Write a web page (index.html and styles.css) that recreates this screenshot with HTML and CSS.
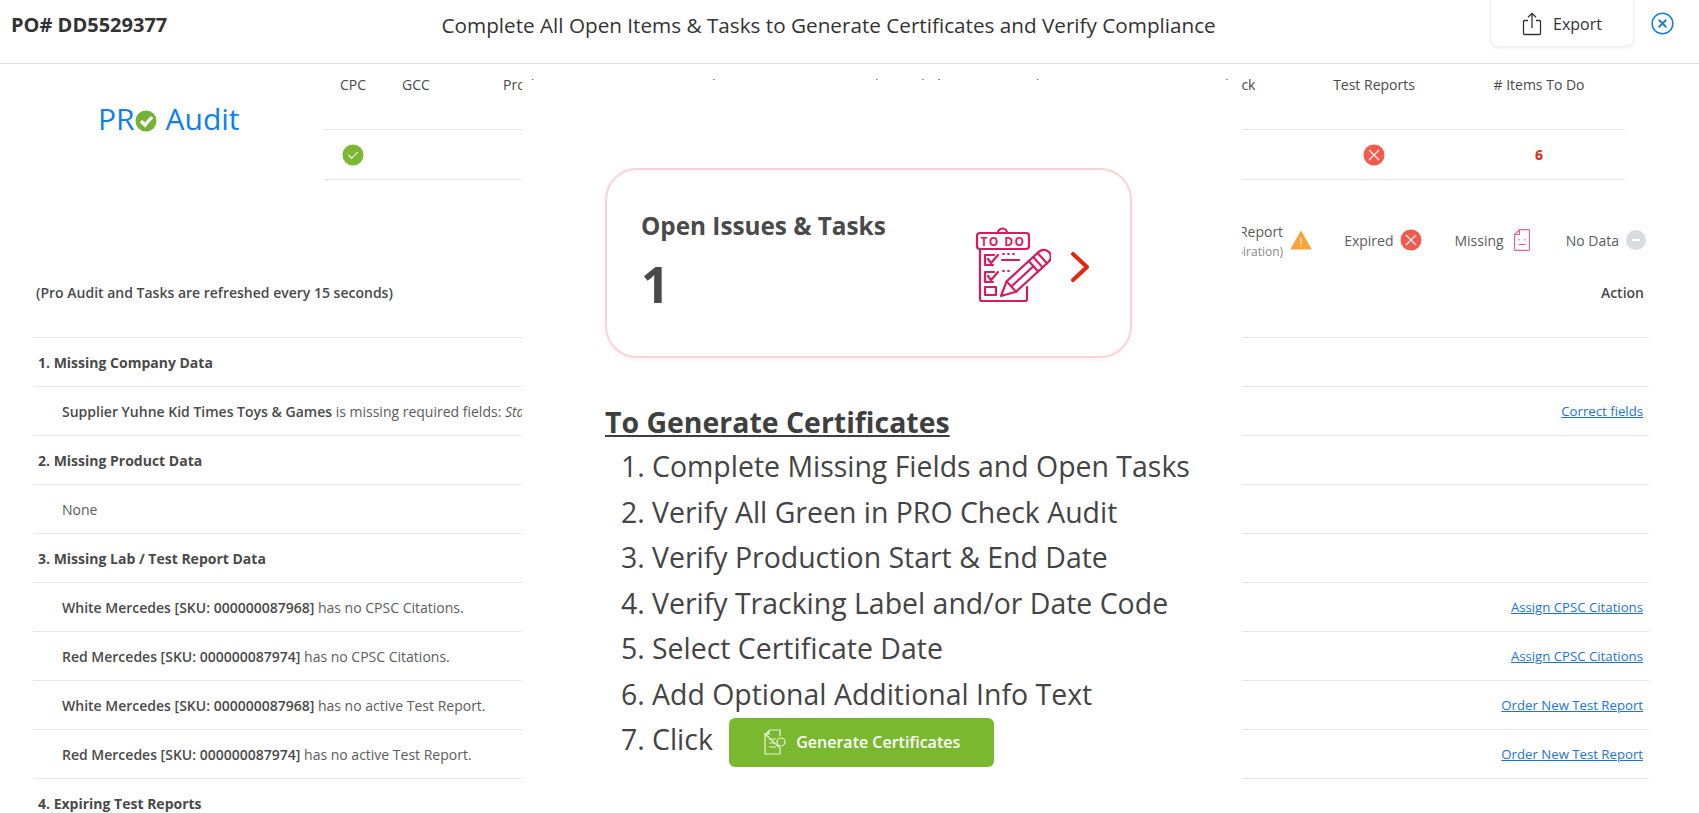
FILE: index.html
```html
<!DOCTYPE html>
<html lang="en">
<head>
    <meta charset="UTF-8">
    <title>PRO Audit - PO# DD5529377</title>
    <link rel="stylesheet" href="styles.css">
</head>
<body>
    <div class="page">
        <header class="top-bar">
            <div class="po-number">PO# DD5529377</div>
            <div class="top-title">Complete All Open Items &amp; Tasks to Generate Certificates and Verify Compliance</div>
            <div class="top-actions">
                <button class="export-button">
                    <svg class="export-icon" viewBox="0 0 20 24" fill="none" stroke="#333" stroke-width="1.3">
                        <path d="M6 8.5H2.5a1 1 0 0 0-1 1v12a1 1 0 0 0 1 1h15a1 1 0 0 0 1-1v-12a1 1 0 0 0-1-1H14"/>
                        <path d="M10 16V1.5M6 5.2l4-3.9 4 3.9"/>
                    </svg>
                    Export
                </button>
                <svg class="close-icon" viewBox="0 0 24 24" fill="none" stroke="#1b7fe0">
                    <circle cx="12" cy="12" r="10.8" stroke-width="1.6"/>
                    <path d="M8.6 8.6l6.8 6.8M15.4 8.6l-6.8 6.8" stroke-width="2" stroke-linecap="round"/>
                </svg>
            </div>
        </header>

        <section class="summary">
            <div class="logo">
                <span>PR</span>
                <svg class="logo-check" viewBox="0 0 22 22">
                    <circle cx="11" cy="11" r="10.5" fill="#74b337"/>
                    <path d="M6 11l4 4 7-8" fill="none" stroke="#fff" stroke-width="3.4"/>
                </svg>
                <span class="logo-word">Audit</span>
            </div>
            <div class="summary-table">
                <div class="summary-row summary-head">
                    <div>CPC</div>
                    <div>GCC</div>
                    <div>Product Data</div>
                    <div>Lab Data</div>
                    <div>Tracking Label</div>
                    <div>Production Date</div>
                    <div>PRO Check</div>
                    <div>Test Reports</div>
                    <div># Items To Do</div>
                </div>
                <div class="summary-row summary-values">
                    <div>
                        <svg class="status-icon" viewBox="0 0 22 22">
                            <circle cx="11" cy="11" r="10.5" fill="#7ab833"/>
                            <path d="M6.5 11l3.2 3.2 6-6" fill="none" stroke="#fff" stroke-width="1.1"/>
                        </svg>
                    </div>
                    <div></div>
                    <div></div>
                    <div></div>
                    <div></div>
                    <div></div>
                    <div></div>
                    <div>
                        <svg class="status-icon" viewBox="0 0 22 22">
                            <circle cx="11" cy="11" r="10.5" fill="#f15b4e"/>
                            <path d="M6 6l10 10M16 6L6 16" fill="none" stroke="#fff" stroke-width="1.1"/>
                        </svg>
                    </div>
                    <div class="todo-count">6</div>
                </div>
            </div>
        </section>

        <div class="legend">
            <div class="legend-item">
                <div class="legend-stack">
                    <div>Expiring Report</div>
                    <div class="legend-note">(30 days to expiration)</div>
                </div>
                <svg class="legend-warn" viewBox="0 0 22 20">
                    <path d="M11 .5L21.8 19.6H.2z" fill="#f9a33b"/>
                    <path d="M11 8v6M11 15.6v1.4" stroke="#fff" stroke-width="1"/>
                </svg>
            </div>
            <div class="legend-item">
                <span>Expired</span>
                <svg class="status-icon" viewBox="0 0 22 22">
                    <circle cx="11" cy="11" r="10.5" fill="#f15b4e"/>
                    <path d="M6 6l10 10M16 6L6 16" fill="none" stroke="#fff" stroke-width="1.1"/>
                </svg>
            </div>
            <div class="legend-item">
                <span>Missing</span>
                <svg class="legend-doc" viewBox="0 0 16 22" fill="none" stroke="#e8608f" stroke-width="1.1">
                    <path d="M5.5.6h9.1a.8.8 0 0 1 .8.8v19.2a.8.8 0 0 1-.8.8H1.4a.8.8 0 0 1-.8-.8V5.5z"/>
                    <path d="M5.5.6v4.9H.6"/>
                    <path d="M5 10v1.4M11 10v1.4M4.5 15.5h7"/>
                </svg>
            </div>
            <div class="legend-item legend-last">
                <span>No Data</span>
                <svg class="legend-nodata" viewBox="0 0 20 20">
                    <circle cx="10" cy="10" r="10" fill="#d8dbe0"/>
                    <path d="M6 10h8" stroke="#fff" stroke-width="2"/>
                </svg>
            </div>
        </div>

        <div class="task-head">
            <div>(Pro Audit and Tasks are refreshed every 15 seconds)</div>
            <div>Action</div>
        </div>

        <div class="task-list">
            <div class="task-row task-group">1. Missing Company Data</div>
            <div class="task-row">
                <div><b>Supplier Yuhne Kid Times Toys &amp; Games</b> is missing required fields: <i>State, Zip</i></div>
                <a href="#">Correct fields</a>
            </div>
            <div class="task-row task-group">2. Missing Product Data</div>
            <div class="task-row">None</div>
            <div class="task-row task-group">3. Missing Lab / Test Report Data</div>
            <div class="task-row">
                <div><b>White Mercedes [SKU: 000000087968]</b> has no CPSC Citations.</div>
                <a href="#">Assign CPSC Citations</a>
            </div>
            <div class="task-row">
                <div><b>Red Mercedes [SKU: 000000087974]</b> has no CPSC Citations.</div>
                <a href="#">Assign CPSC Citations</a>
            </div>
            <div class="task-row">
                <div><b>White Mercedes [SKU: 000000087968]</b> has no active Test Report.</div>
                <a href="#">Order New Test Report</a>
            </div>
            <div class="task-row">
                <div><b>Red Mercedes [SKU: 000000087974]</b> has no active Test Report.</div>
                <a href="#">Order New Test Report</a>
            </div>
            <div class="task-row task-group">4. Expiring Test Reports</div>
        </div>

        <div class="overlay">
            <div class="issues-card">
                <div class="issues-text">
                    <div class="issues-title">Open Issues &amp; Tasks</div>
                    <div class="issues-count">1</div>
                </div>
                <svg class="todo-icon" viewBox="0 0 76 76" fill="none" stroke="#d81b60" stroke-width="2.2" stroke-linejoin="round" stroke-linecap="round">
                    <path d="M23 6a4.5 4.5 0 0 1 9 0"/>
                    <rect x="2" y="6" width="52" height="16" rx="3"/>
                    <text class="todo-label" x="28" y="18.5" text-anchor="middle">TO DO</text>
                    <path d="M5 22v50a2 2 0 0 0 2 2h43a2 2 0 0 0 2-2V60"/>
                    <path d="M19 28h-9v10h8"/>
                    <path d="M13 32l3 4 7-8"/>
                    <path d="M27 33h17"/>
                    <path d="M28 27h1M33 27h1M38 27h1M28 44h1M33 44h1" stroke-width="1.8"/>
                    <path d="M19 45h-9v10h8"/>
                    <path d="M13 49l3 4 7-8"/>
                    <rect x="10" y="60" width="11" height="8"/>
                    <g transform="translate(26 69) rotate(-42.5)">
                        <path d="M0 0L14-7H58a7 7 0 0 1 0 14H14z" fill="#fff"/>
                        <path d="M14-7V7M14 0H44M44-7V7M50-7V7M56-7V7"/>
                    </g>
                </svg>
                <svg class="card-chevron" viewBox="0 0 18 30" fill="none" stroke="#e8260e" stroke-width="4" stroke-linecap="round" stroke-linejoin="round">
                    <path d="M2 2l14 13L2 28"/>
                </svg>
            </div>

            <h2 class="steps-title">To Generate Certificates</h2>
            <ol class="steps">
                <li>Complete Missing Fields and Open Tasks</li>
                <li>Verify All Green in PRO Check Audit</li>
                <li>Verify Production Start &amp; End Date</li>
                <li>Verify Tracking Label and/or Date Code</li>
                <li>Select Certificate Date</li>
                <li>Add Optional Additional Info Text</li>
                <li>
                    Click
                    <button class="generate-button">
                        <svg class="generate-icon" viewBox="0 0 24 26" fill="none" stroke="#e6f3d6" stroke-width="1.2">
                            <path d="M6 1h11v6M17 19v6H2V5z"/>
                            <path d="M6 1v4H2" fill="#e6f3d6"/>
                            <path d="M6 10h7M6 14h5M6 18h7"/>
                            <circle cx="18" cy="13" r="4"/>
                        </svg>
                        Generate Certificates
                    </button>
                </li>
            </ol>
        </div>
    </div>
</body>
</html>
```

FILE: styles.css
```css
* {
    margin: 0;
    padding: 0;
    box-sizing: border-box;
}

body {
    font-family: 'Open Sans', 'Liberation Sans', sans-serif;
    background: #FFFFFF;
    color: #4A4A4A;
    font-size: 14px;
}

.page {
    position: relative;
    height: 813px;
    overflow: hidden;
}

/* Top bar */
.top-bar {
    height: 64px;
    padding: 0 25px 14px 11px;
    border-bottom: 1px solid #DEDEDE;
    display: flex;
    justify-content: space-between;
    align-items: center;
}

.po-number {
    font-size: 20px;
    font-weight: 700;
    color: #333333;
}

.top-title {
    font-size: 20.7px;
    font-weight: 500;
    color: #333333;
}

.top-actions {
    display: flex;
    align-items: flex-start;
    gap: 17px;
    align-self: flex-start;
}

.export-button {
    width: 144px;
    height: 57px;
    margin-top: -10px;
    padding-top: 10px;
    background: #FFFFFF;
    border: 1px solid #F0F0F0;
    border-radius: 8px;
    box-shadow: 0 1px 3px rgba(0, 0, 0, 0.08);
    font-family: inherit;
    font-size: 16px;
    font-weight: 500;
    color: #333333;
    display: flex;
    align-items: center;
    justify-content: center;
    gap: 11px;
}

.export-icon {
    width: 20px;
    height: 24px;
}

.close-icon {
    width: 23px;
    height: 23px;
    margin-top: 12px;
}

/* Logo and summary table */
.summary {
    display: flex;
}

.logo {
    width: 324px;
    height: 115px;
    padding-left: 98px;
    padding-bottom: 5px;
    display: flex;
    align-items: center;
    font-size: 30px;
    font-weight: 500;
    line-height: 1;
    color: #0D7FF0;
}

.logo-check {
    width: 22px;
    height: 22px;
    margin-top: 3px;
}

.logo-word {
    margin-left: 9px;
}

.summary-table {
    width: 1301px;
}

.summary-row {
    display: grid;
    grid-template-columns: 58px 68px 192px 168px 168px 167px 150px 158px 172px;
    text-align: center;
    align-items: center;
}

.summary-head {
    height: 66px;
    padding-bottom: 24px;
    font-size: 14px;
    font-weight: 500;
    border-bottom: 1px solid #E6E6E6;
}

.summary-values {
    height: 50px;
    border-bottom: 1px solid #E6E6E6;
}

.status-icon {
    width: 22px;
    height: 22px;
    display: block;
    margin: 0 auto;
}

.todo-count {
    font-weight: 700;
    color: #E8260E;
}

/* Legend */
.legend {
    height: 46px;
    margin-top: 37px;
    padding-right: 53px;
    display: flex;
    justify-content: flex-end;
    align-items: center;
    gap: 32px;
    color: #5C5C5C;
}

.legend-item {
    display: flex;
    align-items: center;
    gap: 7px;
}

.legend-last {
    margin-left: 4px;
}

.legend-stack {
    padding-top: 3px;
    text-align: right;
    line-height: 20px;
}

.legend-note {
    font-size: 12px;
    color: #888888;
}

.legend-warn {
    width: 22px;
    height: 20px;
}

.legend-doc {
    width: 16px;
    height: 22px;
    margin-left: 3px;
}

.legend-nodata {
    width: 20px;
    height: 20px;
}

/* Task list */
.task-head {
    height: 58px;
    margin-bottom: 16px;
    padding: 0 55px 0 36px;
    display: flex;
    justify-content: space-between;
    align-items: center;
    font-size: 14px;
    font-weight: 600;
}

.task-list {
    margin: 0 50px 0 33px;
    border-top: 1px solid #E6E6E6;
}

.task-row {
    height: 49px;
    padding: 0 6px 0 29px;
    border-bottom: 1px solid #E6E6E6;
    display: flex;
    justify-content: space-between;
    align-items: center;
    font-size: 14px;
    color: #5C5C5C;
}

.task-row b {
    font-weight: 600;
    color: #4A4A4A;
}

.task-row a {
    font-size: 13.2px;
    color: #1A73D9;
}

.task-group {
    padding-left: 5px;
    font-size: 14px;
    font-weight: 700;
    color: #4A4A4A;
}

/* White panel lying over the audit page */
.overlay {
    position: absolute;
    top: 80px;
    left: 522px;
    width: 720px;
    bottom: 0;
    background: #FFFFFF;
    padding: 88px 0 0 83px;
}

.issues-card {
    width: 527px;
    height: 190px;
    padding: 0 41px 0 34px;
    background: #FFFFFF;
    border: 2px solid #FBD3D3;
    border-radius: 32px;
    box-shadow: 0 2px 6px rgba(0, 0, 0, 0.04);
    display: flex;
    align-items: center;
}

.issues-text {
    flex: 1;
    color: #4A4A4A;
}

.issues-title {
    font-size: 24.3px;
    font-weight: 700;
}

.issues-count {
    margin-top: 8px;
    font-size: 50px;
    line-height: 68px;
    font-weight: 700;
}

.todo-icon {
    width: 76px;
    height: 76px;
    margin: 3px 20px 0 0;
}

.todo-label {
    font-family: 'Open Sans', sans-serif;
    font-size: 12px;
    font-weight: 700;
    letter-spacing: 1.4px;
    fill: #D81B60;
    stroke: none;
}

.card-chevron {
    width: 18px;
    height: 30px;
    margin-top: 8px;
}

.steps-title {
    margin-top: 42px;
    font-size: 28.45px;
    line-height: 44px;
    font-weight: 700;
    color: #3F3F3F;
    text-decoration: underline;
}

.steps {
    padding-left: 47px;
    font-size: 28.45px;
    color: #444444;
}

.steps li {
    height: 45.5px;
    line-height: 45.5px;
}

.generate-button {
    width: 265px;
    height: 49px;
    margin-left: 9px;
    vertical-align: middle;
    background: #7AB92F;
    border: none;
    border-radius: 6px;
    font-family: inherit;
    font-size: 16px;
    font-weight: 600;
    color: #FFFFFF;
    display: inline-flex;
    align-items: center;
    justify-content: center;
    gap: 9px;
}

.generate-icon {
    width: 24px;
    height: 26px;
}
```
